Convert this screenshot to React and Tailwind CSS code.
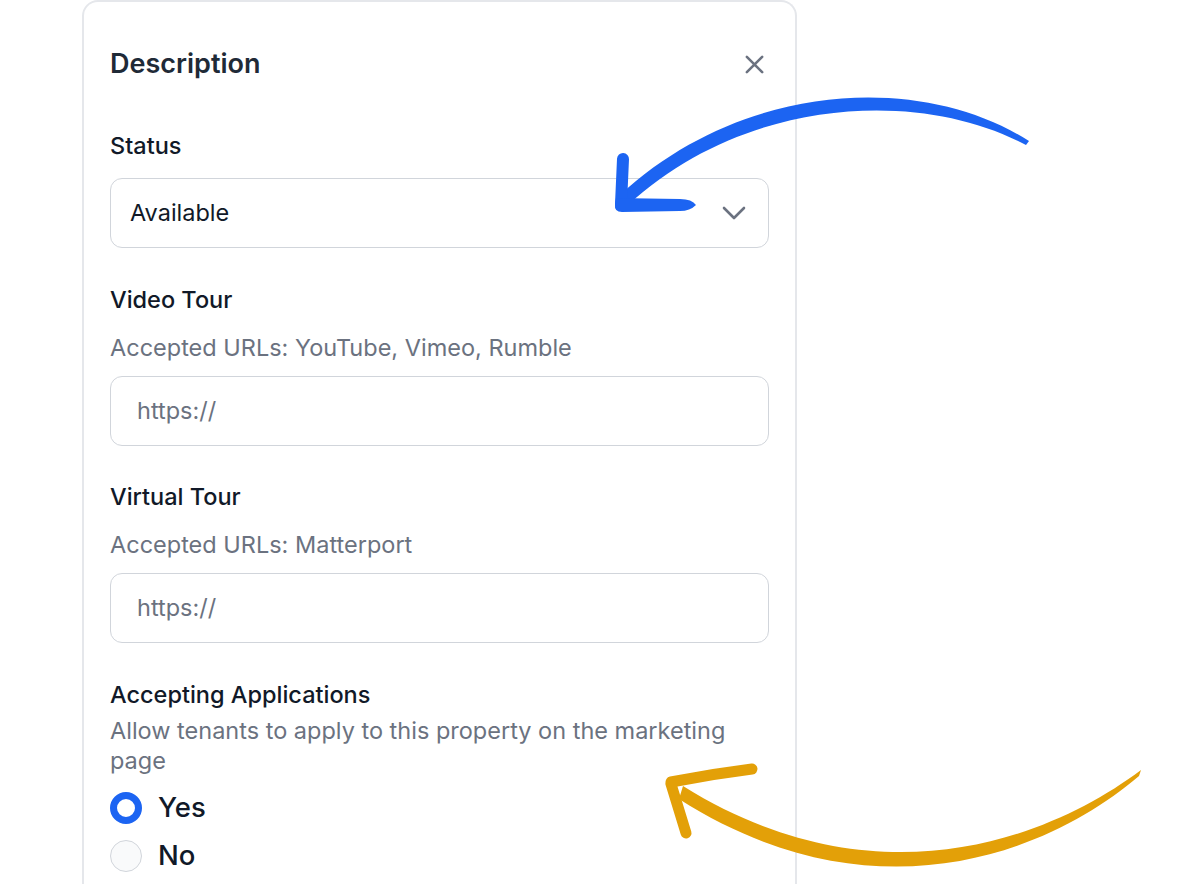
import React from "react";

function Arrows() {
  return (
    <svg
      className="pointer-events-none absolute left-0 top-0"
      width="1180"
      height="884"
      viewBox="0 0 1180 884"
    >
      {/* blue arrow */}
      <path
        d="M1029,141 L1026,145 C920,88 745,97 628,205 L620,195 C742,82 920,72 1029,141 Z"
        fill="#1C64F2"
      />
      <path d="M623,159 L621,204" stroke="#1C64F2" strokeWidth="12" strokeLinecap="round" fill="none" />
      <path
        d="M616,198 L680,199 Q692,199 696,205 Q690,211 680,211 L622,212 Q614,212 615,204 Z"
        fill="#1C64F2"
      />
      {/* gold arrow */}
      <path
        d="M1141,770 C1045,842 872,904 683,786 L679,799 C872,922 1048,854 1139,776 Z"
        fill="#E3A008"
      />
      <path d="M671,782 Q712,774 752,769" stroke="#E3A008" strokeWidth="11" strokeLinecap="round" fill="none" />
      <path d="M671,784 L686,833" stroke="#E3A008" strokeWidth="11" strokeLinecap="round" fill="none" />
    </svg>
  );
}

function Label({ children, className = "" }) {
  return (
    <div className={"text-[23.5px] leading-[30px] font-medium text-[#111928] " + className}>
      {children}
    </div>
  );
}

function Helper({ children, className = "" }) {
  return (
    <div className={"text-[23.5px] leading-[30px] text-[#6B7280] " + className}>{children}</div>
  );
}

export default function App() {
  return (
    <div
      className="relative h-[884px] w-[1180px] overflow-hidden bg-white"
      style={{ fontFamily: "Inter, 'Noto Sans', sans-serif" }}
    >
      <div className="ml-[82px] h-[900px] w-[715px] rounded-t-[16px] border-2 border-b-0 border-[#e5e7eb] px-[26px] pt-[46px]">
        <div className="flex h-[32px] items-center justify-between">
          <div className="text-[27px] font-semibold leading-[32px] text-[#1F2A37]">Description</div>
          <svg width="23" height="23" viewBox="0 0 24 24" className="mr-[3px]" fill="none" stroke="#6B7280" strokeWidth="2.7" strokeLinecap="round">
            <path d="M4 4 L20 20 M20 4 L4 20" />
          </svg>
        </div>

        <Label className="mt-[51px]">Status</Label>
        <div className="mt-[17px] flex h-[70px] items-center justify-between rounded-[12px] border-[1.5px] border-[#d1d5db] pl-[19px] pr-[22px]">
          <span className="text-[23.5px] text-[#111928]">Available</span>
          <svg width="24" height="14" viewBox="0 0 24 14" fill="none" stroke="#6B7280" strokeWidth="2.6" strokeLinecap="round" strokeLinejoin="round">
            <path d="M2 2 L12 12 L22 2" />
          </svg>
        </div>

        <Label className="mt-[37px]">Video Tour</Label>
        <Helper className="mt-[18px]">Accepted URLs: YouTube, Vimeo, Rumble</Helper>
        <div className="mt-[13px] flex h-[70px] items-center rounded-[12px] border-[1.5px] border-[#d1d5db] pl-[26px]">
          <span className="text-[23.5px] text-[#6B7280]">https://</span>
        </div>

        <Label className="mt-[36px]">Virtual Tour</Label>
        <Helper className="mt-[18px]">Accepted URLs: Matterport</Helper>
        <div className="mt-[13px] flex h-[70px] items-center rounded-[12px] border-[1.5px] border-[#d1d5db] pl-[26px]">
          <span className="text-[23.5px] text-[#6B7280]">https://</span>
        </div>

        <Label className="mt-[37px]">Accepting Applications</Label>
        <Helper className="mt-[6px]">
          Allow tenants to apply to this property on the marketing page
        </Helper>

        <div className="mt-[16px] flex h-[32px] items-center gap-[16px]">
          <div className="h-[32px] w-[32px] rounded-full border-[7px] border-[#1C64F2] bg-white" />
          <span className="text-[27.5px] font-medium text-[#111928]">Yes</span>
        </div>
        <div className="mt-[16px] flex h-[32px] items-center gap-[16px]">
          <div className="h-[32px] w-[32px] rounded-full border border-[#d1d5db] bg-[#f9fafb]" />
          <span className="text-[27.5px] font-medium text-[#111928]">No</span>
        </div>
      </div>
      <Arrows />
    </div>
  );
}
